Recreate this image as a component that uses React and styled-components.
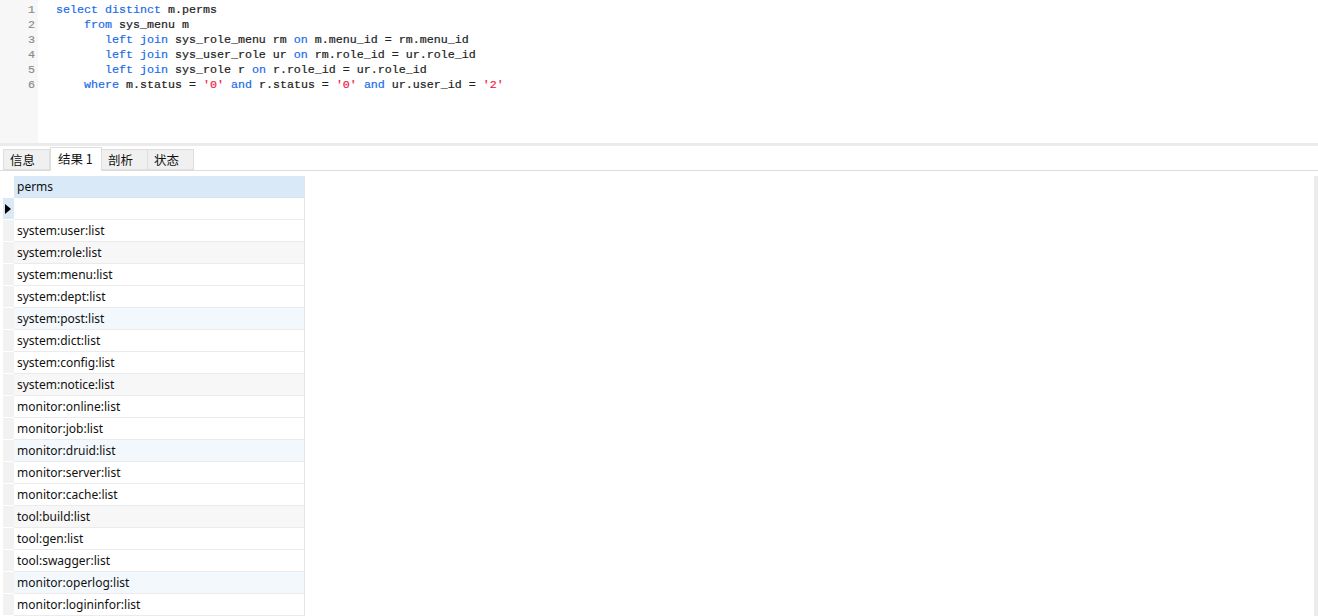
import React from 'react'
import styled, { createGlobalStyle } from 'styled-components'

const Global = createGlobalStyle`
  html, body {
    margin: 0;
    padding: 0;
    background: #fff;
    overflow: hidden;
  }
  body {
    font-family: "Noto Sans", "Noto Sans CJK SC", sans-serif;
  }
`

const Page = styled.div`
  width: 1318px;
  height: 616px;
  display: flex;
  flex-direction: column;
  background: #fff;
`

// editor
const Editor = styled.div`
  height: 143px;
  display: flex;
  flex-shrink: 0;
`

const Gutter = styled.div`
  width: 38px;
  background: #f7f7f7;
  padding-top: 3px;
  box-sizing: border-box;
`

const Code = styled.div`
  flex: 1;
  padding: 3px 0 0 18px;
`

const Line = styled.div`
  height: 15px;
  line-height: 15px;
  font-family: "Liberation Mono", "DejaVu Sans Mono", monospace;
  font-size: 11.67px;
  white-space: pre;
  color: ${p => p.num ? '#8c8c8c' : '#222'};
  text-align: ${p => p.num ? 'right' : 'left'};
  padding-right: ${p => p.num ? '3px' : '0'};
  -webkit-text-stroke: 0.2px currentColor;
`

const Tok = styled.span`
  color: ${p => p.kind === 'kw' ? '#1a6ce8' : p.kind === 'str' ? '#ee1a3c' : '#222'};
`

const Splitter = styled.div`
  height: 3px;
  background: #ebebeb;
  flex-shrink: 0;
`

// tabs
const TabBar = styled.div`
  height: 24px;
  display: flex;
  align-items: flex-end;
  padding-left: 3px;
  border-bottom: 1px solid #dcdcdc;
  flex-shrink: 0;
`

const Tab = styled.div`
  box-sizing: border-box;
  height: ${p => p.active ? '24px' : '21px'};
  width: ${p => p.w}px;
  margin-bottom: ${p => p.active ? '-1px' : '0'};
  background: ${p => p.active ? '#fff' : '#f0f0f0'};
  border: 1px solid #dedede;
  border-bottom: ${p => p.active ? 'none' : '1px solid #dedede'};
  border-left: ${p => p.first || p.active ? '1px solid #dedede' : 'none'};
  font-size: 12.5px;
  color: #111;
  padding: ${p => p.active ? '1px 0 0 7px' : '0 0 0 6px'};
  line-height: ${p => p.active ? '19px' : '20px'};
  font-family: "Noto Sans CJK SC", "Noto Sans", sans-serif;
`

// grid
const GridArea = styled.div`
  flex: 1;
  display: flex;
  padding-top: 5px;
  min-height: 0;
`

const Table = styled.div`
  margin-left: 3px;
  display: flex;
  flex-direction: column;
`

const Row = styled.div`
  display: flex;
  height: 22px;
  flex-shrink: 0;
`

const Indicator = styled.div`
  width: 11px;
  box-sizing: border-box;
  background: ${p => p.header ? '#fff' : p.current ? '#dbe9f7' : '#f2f2f2'};
  border-bottom: 1px solid #fff;
  display: flex;
  align-items: center;
  justify-content: center;
`

const Cell = styled.div`
  width: 291px;
  box-sizing: border-box;
  border-right: 1px solid #e4e4e4;
  border-bottom: 1px solid ${p => p.header ? '#d6e3f0' : '#ebebeb'};
  background: ${p => p.header ? '#d9e9f7' : p.tint === 'gray' ? '#f7f7f7' : p.tint === 'blue' ? '#f3f8fd' : '#fff'};
  font-size: 12px;
  color: #111;
  line-height: 21px;
  padding-left: 3px;
  white-space: nowrap;
`

const Filler = styled.div`
  flex: 1;
`

const Scrollbar = styled.div`
  width: 4px;
  background: #ececec;
`

const Triangle = styled.div`
  width: 0;
  height: 0;
  border-top: 5px solid transparent;
  border-bottom: 5px solid transparent;
  border-left: 6px solid #000;
  margin-right: 1px;
`

const K = 'kw', S = 'str', T = 'txt'

const lines = [
  [[K, 'select distinct'], [T, ' m.perms']],
  [[T, '    '], [K, 'from'], [T, ' sys_menu m']],
  [[T, '       '], [K, 'left join'], [T, ' sys_role_menu rm '], [K, 'on'], [T, ' m.menu_id = rm.menu_id']],
  [[T, '       '], [K, 'left join'], [T, ' sys_user_role ur '], [K, 'on'], [T, ' rm.role_id = ur.role_id']],
  [[T, '       '], [K, 'left join'], [T, ' sys_role r '], [K, 'on'], [T, ' r.role_id = ur.role_id']],
  [[T, '    '], [K, 'where'], [T, ' m.status = '], [S, "'0'"], [T, ' '], [K, 'and'], [T, ' r.status = '], [S, "'0'"], [T, ' '], [K, 'and'], [T, ' ur.user_id = '], [S, "'2'"]],
]

const perms = [
  'system:user:list', 'system:role:list', 'system:menu:list', 'system:dept:list',
  'system:post:list', 'system:dict:list', 'system:config:list', 'system:notice:list',
  'monitor:online:list', 'monitor:job:list', 'monitor:druid:list', 'monitor:server:list',
  'monitor:cache:list', 'tool:build:list', 'tool:gen:list', 'tool:swagger:list',
  'monitor:operlog:list', 'monitor:logininfor:list',
]

const tabs = [
  { label: '信息', w: 47 },
  { label: '结果 1', w: 52, active: true },
  { label: '剖析', w: 46 },
  { label: '状态', w: 46 },
]

// every third row is shaded, alternating gray / blue
const tintFor = (i) => {
  if (i % 3 !== 1) return null
  return Math.floor(i / 3) % 2 === 0 ? 'gray' : 'blue'
}

export default function App () {
  return (
    <Page>
      <Global />
      <Editor>
        <Gutter>
          {lines.map((_, i) => <Line num key={i}>{i + 1}</Line>)}
        </Gutter>
        <Code>
          {lines.map((toks, i) => (
            <Line key={i}>
              {toks.map(([kind, text], j) => <Tok key={j} kind={kind}>{text}</Tok>)}
            </Line>
          ))}
        </Code>
      </Editor>
      <Splitter />
      <TabBar>
        {tabs.map((t, i) => (
          <Tab key={t.label} w={t.w} active={t.active} first={i === 0}>{t.label}</Tab>
        ))}
      </TabBar>
      <GridArea>
        <Table>
          <Row>
            <Indicator header />
            <Cell header>perms</Cell>
          </Row>
          <Row>
            <Indicator current><Triangle /></Indicator>
            <Cell />
          </Row>
          {perms.map((p, i) => (
            <Row key={p}>
              <Indicator />
              <Cell tint={tintFor(i)}>{p}</Cell>
            </Row>
          ))}
        </Table>
        <Filler />
        <Scrollbar />
      </GridArea>
    </Page>
  )
}
